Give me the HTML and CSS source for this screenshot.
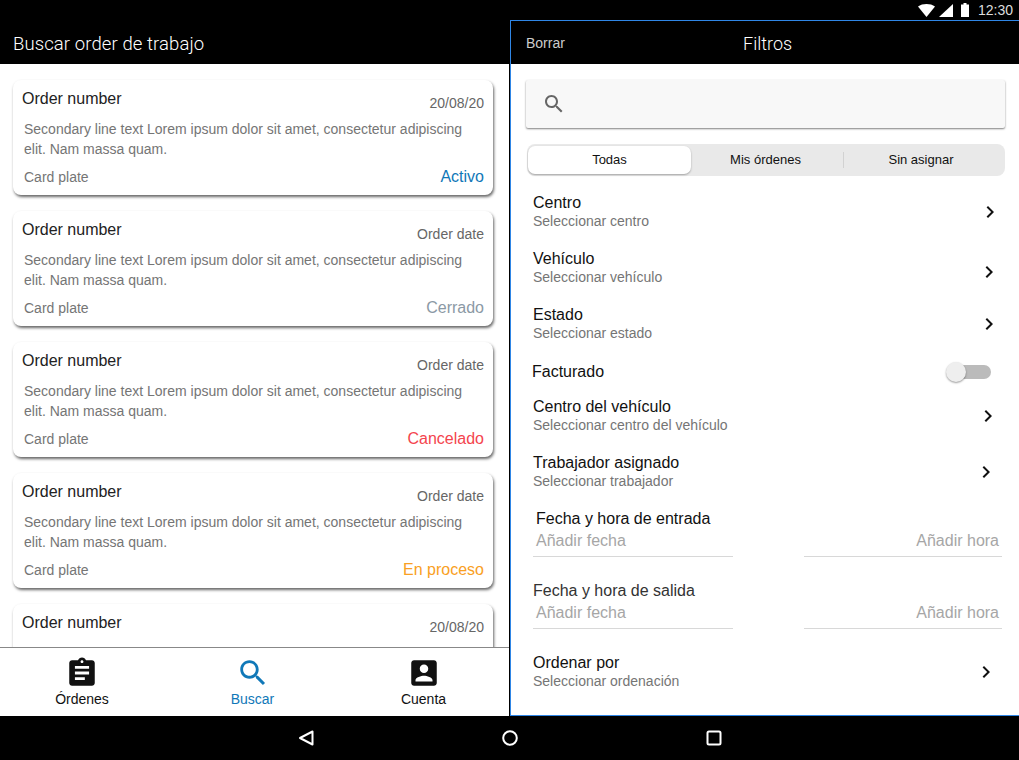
FILE: index.html
```html
<!DOCTYPE html>
<html lang="es">
<head>
    <meta charset="UTF-8">
    <meta name="viewport" content="width=device-width, initial-scale=1.0">
    <title>Buscar order de trabajo</title>
    <link rel="stylesheet" href="styles.css">
</head>
<body>
    <div class="statusbar">
        <svg class="status-wifi" width="17" height="13" viewBox="0 0 17 13"><path d="M0 2.5 C4.5 -0.8 12.5 -0.8 17 2.5 L8.5 13 Z" fill="#fff"/></svg>
        <svg class="status-signal" width="14" height="13" viewBox="0 0 14 13"><path d="M14 0V13H0Z" fill="#fff"/></svg>
        <svg class="status-battery" width="8" height="14" viewBox="0 0 8 14"><path d="M2.5 0h3v1.5H8V14H0V1.5h2.5Z" fill="#fff"/></svg>
        <span class="status-time">12:30</span>
    </div>

    <div class="main">
        <div class="orders">
            <div class="orders-header">Buscar order de trabajo</div>
            <div class="orders-list">
                <div class="card">
                    <div class="card-head"><span class="card-title">Order number</span><span class="card-date">20/08/20</span></div>
                    <p class="card-text">Secondary line text Lorem ipsum dolor sit amet, consectetur adipiscing elit. Nam massa quam.</p>
                    <div class="card-foot"><span class="card-plate">Card plate</span><span class="status status-active">Activo</span></div>
                </div>
                <div class="card">
                    <div class="card-head"><span class="card-title">Order number</span><span class="card-date">Order date</span></div>
                    <p class="card-text">Secondary line text Lorem ipsum dolor sit amet, consectetur adipiscing elit. Nam massa quam.</p>
                    <div class="card-foot"><span class="card-plate">Card plate</span><span class="status status-closed">Cerrado</span></div>
                </div>
                <div class="card">
                    <div class="card-head"><span class="card-title">Order number</span><span class="card-date">Order date</span></div>
                    <p class="card-text">Secondary line text Lorem ipsum dolor sit amet, consectetur adipiscing elit. Nam massa quam.</p>
                    <div class="card-foot"><span class="card-plate">Card plate</span><span class="status status-canceled">Cancelado</span></div>
                </div>
                <div class="card">
                    <div class="card-head"><span class="card-title">Order number</span><span class="card-date">Order date</span></div>
                    <p class="card-text">Secondary line text Lorem ipsum dolor sit amet, consectetur adipiscing elit. Nam massa quam.</p>
                    <div class="card-foot"><span class="card-plate">Card plate</span><span class="status status-progress">En proceso</span></div>
                </div>
                <div class="card card-partial">
                    <div class="card-head"><span class="card-title">Order number</span><span class="card-date">20/08/20</span></div>
                </div>
            </div>
            <div class="tabs">
                <div class="tab tab-first">
                    <svg width="34" height="34" viewBox="0 0 24 24"><path d="M19 3h-4.18C14.4 1.84 13.3 1 12 1s-2.4.84-2.82 2H5c-1.1 0-2 .9-2 2v14c0 1.1.9 2 2 2h14c1.1 0 2-.9 2-2V5c0-1.1-.9-2-2-2zm-7 0c.55 0 1 .45 1 1s-.45 1-1 1-1-.45-1-1 .45-1 1-1zm2 14H7v-2h7v2zm3-4H7v-2h10v2zm0-4H7V7h10v2z" fill="#111"/></svg>
                    <span>Órdenes</span>
                </div>
                <div class="tab tab-current">
                    <svg width="34" height="34" viewBox="0 0 24 24"><path d="M15.5 14h-.79l-.28-.27C15.41 12.59 16 11.11 16 9.5 16 5.91 13.09 3 9.5 3S3 5.91 3 9.5 5.91 16 9.5 16c1.61 0 3.09-.59 4.23-1.57l.27.28v.79l5 4.99L20.49 19l-4.99-5zm-6 0C7.01 14 5 11.99 5 9.5S7.01 5 9.5 5 14 7.01 14 9.5 11.99 14 9.5 14z" fill="#1078b8"/></svg>
                    <span>Buscar</span>
                </div>
                <div class="tab">
                    <svg width="34" height="34" viewBox="0 0 24 24"><path d="M3 5v14c0 1.1.89 2 2 2h14c1.1 0 2-.9 2-2V5c0-1.1-.9-2-2-2H5c-1.11 0-2 .9-2 2zm12 4c0 1.66-1.34 3-3 3s-3-1.34-3-3 1.34-3 3-3 3 1.34 3 3zm-9 8c0-2 4-3.1 6-3.1s6 1.1 6 3.1v1H6v-1z" fill="#111"/></svg>
                    <span>Cuenta</span>
                </div>
            </div>
        </div>

        <div class="filters">
            <div class="filters-header">
                <span class="filters-clear">Borrar</span>
                <span class="filters-title">Filtros</span>
            </div>
            <div class="filters-body">
                <div class="search-box">
                    <svg width="24" height="24" viewBox="0 0 24 24"><path d="M15.5 14h-.79l-.28-.27C15.41 12.59 16 11.11 16 9.5 16 5.91 13.09 3 9.5 3S3 5.91 3 9.5 5.91 16 9.5 16c1.61 0 3.09-.59 4.23-1.57l.27.28v.79l5 4.99L20.49 19l-4.99-5zm-6 0C7.01 14 5 11.99 5 9.5S7.01 5 9.5 5 14 7.01 14 9.5 11.99 14 9.5 14z" fill="#666"/></svg>
                </div>

                <div class="segments">
                    <div class="segment segment-on">Todas</div>
                    <div class="segment segment-mid">Mis órdenes</div>
                    <div class="segment segment-last">Sin asignar</div>
                </div>

                <div class="row row-a">
                    <div><div class="row-title">Centro</div><div class="row-sub">Seleccionar centro</div></div>
                    <svg class="chevron" width="24" height="24" viewBox="0 0 24 24"><path d="M10 6L8.59 7.41 13.17 12l-4.58 4.59L10 18l6-6z"/></svg>
                </div>
                <div class="row row-b">
                    <div><div class="row-title">Vehículo</div><div class="row-sub">Seleccionar vehículo</div></div>
                    <svg class="chevron chevron-low" width="24" height="24" viewBox="0 0 24 24"><path d="M10 6L8.59 7.41 13.17 12l-4.58 4.59L10 18l6-6z"/></svg>
                </div>
                <div class="row row-b">
                    <div><div class="row-title">Estado</div><div class="row-sub">Seleccionar estado</div></div>
                    <svg class="chevron" width="24" height="24" viewBox="0 0 24 24"><path d="M10 6L8.59 7.41 13.17 12l-4.58 4.59L10 18l6-6z"/></svg>
                </div>
                <div class="row row-toggle">
                    <div class="row-title">Facturado</div>
                    <div class="toggle"><div class="toggle-knob"></div></div>
                </div>
                <div class="row row-c">
                    <div><div class="row-title">Centro del vehículo</div><div class="row-sub">Seleccionar centro del vehículo</div></div>
                    <svg class="chevron" width="24" height="24" viewBox="0 0 24 24"><path d="M10 6L8.59 7.41 13.17 12l-4.58 4.59L10 18l6-6z"/></svg>
                </div>
                <div class="row row-d">
                    <div><div class="row-title">Trabajador asignado</div><div class="row-sub">Seleccionar trabajador</div></div>
                    <svg class="chevron" width="24" height="24" viewBox="0 0 24 24"><path d="M10 6L8.59 7.41 13.17 12l-4.58 4.59L10 18l6-6z"/></svg>
                </div>

                <div class="dates">
                    <div class="row-title dates-title-in">Fecha y hora de entrada</div>
                    <div class="date-fields">
                        <div class="date-field">Añadir fecha</div>
                        <div class="date-field date-field-time">Añadir hora</div>
                    </div>
                </div>
                <div class="dates">
                    <div class="row-title dates-title-out">Fecha y hora de salida</div>
                    <div class="date-fields">
                        <div class="date-field">Añadir fecha</div>
                        <div class="date-field date-field-time">Añadir hora</div>
                    </div>
                </div>

                <div class="row row-d">
                    <div><div class="row-title">Ordenar por</div><div class="row-sub">Seleccionar ordenación</div></div>
                    <svg class="chevron" width="24" height="24" viewBox="0 0 24 24"><path d="M10 6L8.59 7.41 13.17 12l-4.58 4.59L10 18l6-6z"/></svg>
                </div>
            </div>
        </div>
    </div>

    <div class="navbar">
        <svg width="16" height="16" viewBox="0 0 16 16"><path d="M14.5 1.5V14.5L2 8Z" fill="none" stroke="#fff" stroke-width="2" stroke-linejoin="round"/></svg>
        <svg width="16" height="16" viewBox="0 0 16 16"><circle cx="8" cy="8" r="6.8" fill="none" stroke="#fff" stroke-width="2"/></svg>
        <svg width="16" height="16" viewBox="0 0 16 16"><rect x="1.5" y="1.5" width="13" height="13" rx="1.5" fill="none" stroke="#fff" stroke-width="2"/></svg>
    </div>
</body>
</html>
```

FILE: styles.css
```css
body {
    margin: 0;
    width: 1019px;
    height: 760px;
    overflow: hidden;
    font-family: "Liberation Sans", Arial, sans-serif;
    background-color: #000;
    color: #111;
}

p {
    margin: 0;
}

/* status bar */
.statusbar {
    display: flex;
    align-items: center;
    justify-content: flex-end;
    height: 20px;
    padding-right: 6px;
    background-color: #000;
}

.status-wifi {
    margin-right: 4px;
}

.status-signal {
    margin-right: 8px;
}

.status-battery {
    margin-right: 9px;
}

.status-time {
    font-size: 14px;
    color: #ddd;
}

.main {
    display: flex;
    height: 696px;
}

/* left pane */
.orders {
    display: flex;
    flex-direction: column;
    width: 510px;
    box-sizing: border-box;
    border-right: 1px solid #000;
    background-color: #fff;
}

.orders-header {
    flex-shrink: 0;
    height: 44px;
    padding-left: 13px;
    line-height: 48px;
    font-family: Roboto, "Liberation Sans", sans-serif;
    font-size: 18.5px;
    font-weight: 300;
    letter-spacing: 0.1px;
    color: #fff;
    background-color: #000;
}

.orders-list {
    flex: 1;
    min-height: 0;
    overflow: hidden;
    display: flex;
    flex-direction: column;
    gap: 16px;
    padding: 16px 16px 0 13px;
}

.card {
    flex-shrink: 0;
    padding: 9px 9px 9px 9px;
    border-radius: 8px;
    background-color: #fff;
    box-shadow: 1px 2px 3px rgba(0, 0, 0, 0.6);
}

.card-partial {
    height: 60px;
}

.card-head {
    display: flex;
    justify-content: space-between;
    align-items: flex-end;
}

.card-title {
    font-size: 16px;
    line-height: 20px;
    margin-bottom: 2px;
    color: #222;
}

.card-date {
    font-size: 14px;
    line-height: 16px;
    color: #666;
}

.card-text {
    margin-top: 8px;
    padding-left: 2px;
    font-size: 14px;
    line-height: 20px;
    color: #757575;
}

.card-foot {
    display: flex;
    justify-content: space-between;
    align-items: flex-end;
    margin-top: 8px;
    padding-left: 2px;
    font-size: 14px;
    line-height: 16px;
    color: #757575;
}

.card-plate {
    margin-bottom: 1px;
}

.status {
    margin-bottom: -1px;
    font-size: 16px;
    line-height: 20px;
}

.status-active {
    color: #1078b8;
}

.status-closed {
    color: #8b99a5;
}

.status-canceled {
    color: #f4444e;
}

.status-progress {
    color: #f9a023;
}

.tabs {
    display: grid;
    grid-template-columns: 167px 171px 171px;
    flex-shrink: 0;
    height: 69px;
    border-top: 1px solid #888;
    box-sizing: border-box;
    background-color: #fff;
}

.tab {
    display: flex;
    flex-direction: column;
    align-items: center;
    padding-top: 8px;
    font-size: 14px;
    color: #111;
}

.tab span {
    margin-top: 1px;
}

.tab-first {
    padding-right: 3px;
}

.tab-current {
    color: #1078b8;
}

/* right pane */
.filters {
    display: flex;
    flex-direction: column;
    width: 509px;
    box-sizing: border-box;
    border-top: 1px solid #2f86e6;
    border-left: 1px solid #2f86e6;
    border-bottom: 1px solid #2f86e6;
    background-color: #fff;
}

.filters-header {
    display: flex;
    align-items: center;
    flex-shrink: 0;
    height: 43px;
    padding-left: 15px;
    background-color: #000;
}

.filters-clear {
    width: 217px;
    font-size: 14px;
    color: #ccc;
}

.filters-title {
    padding-top: 1px;
    font-family: Roboto, "Liberation Sans", sans-serif;
    font-size: 18px;
    font-weight: 300;
    color: #fff;
}

.filters-body {
    padding-top: 16px;
}

.search-box {
    display: flex;
    align-items: center;
    width: 479px;
    height: 48px;
    box-sizing: border-box;
    margin-left: 15px;
    padding-left: 16px;
    border-radius: 2px;
    background-color: #f8f8f8;
    box-shadow: 0 1px 2px rgba(0, 0, 0, 0.5);
}

.segments {
    display: grid;
    grid-template-columns: 163px 153px 161px;
    width: 478px;
    height: 32px;
    box-sizing: border-box;
    margin: 16px 0 17px 16px;
    padding: 2px 0 2px 1px;
    border-radius: 8px;
    background-color: #e9e9e9;
}

.segment {
    display: flex;
    align-items: center;
    justify-content: center;
    padding-bottom: 2px;
    font-size: 13px;
    color: #111;
}

.segment-on {
    border-radius: 7px;
    background-color: #fff;
    box-shadow: 0 1px 2px rgba(0, 0, 0, 0.3);
}

.segment-mid {
    padding-right: 4px;
    background-image: linear-gradient(#d2d2d2, #d2d2d2);
    background-repeat: no-repeat;
    background-size: 1px 16px;
    background-position: right center;
}

.segment-last {
    padding-right: 7px;
}

.row {
    display: flex;
    justify-content: space-between;
    align-items: flex-start;
    height: 36px;
    margin-bottom: 20px;
    padding-left: 22px;
}

.row-a {
    padding-right: 17px;
}

.row-b {
    padding-right: 18px;
}

.row-c {
    padding-right: 19px;
}

.row-d {
    padding-right: 21px;
}

.row-toggle {
    height: 35px;
    margin-bottom: 0;
    padding-top: 1px;
    padding-left: 21px;
    padding-right: 28px;
}

.row-title {
    font-size: 16px;
    line-height: 20px;
    color: #111;
}

.row-sub {
    font-size: 14px;
    line-height: 16px;
    color: #757575;
}

.chevron {
    margin-top: 7px;
    fill: #111;
}

.chevron-low {
    margin-top: 11px;
}

.toggle {
    display: flex;
    align-items: center;
    width: 34px;
    height: 14px;
    margin-top: 3px;
    border-radius: 7px;
    background-color: #bbb;
}

.toggle-knob {
    flex-shrink: 0;
    width: 20px;
    height: 20px;
    margin-left: -11px;
    border-radius: 50%;
    background-color: #eee;
    box-shadow: 0 1px 2px rgba(0, 0, 0, 0.4);
}

.dates {
    height: 72px;
}

.dates-title-in {
    padding-left: 25px;
}

.dates-title-out {
    padding-left: 22px;
    color: #333;
}

.date-fields {
    display: flex;
    gap: 71px;
    padding-left: 22px;
}

.date-field {
    width: 200px;
    height: 28px;
    box-sizing: border-box;
    padding: 0 3px;
    border-bottom: 1px solid #d8d8d8;
    font-size: 16px;
    line-height: 24px;
    color: #a6a6a6;
}

.date-field-time {
    width: 198px;
    text-align: right;
}

/* android buttons */
.navbar {
    display: flex;
    align-items: center;
    justify-content: center;
    gap: 188px;
    height: 44px;
    padding-left: 1px;
    background-color: #000;
}
```
